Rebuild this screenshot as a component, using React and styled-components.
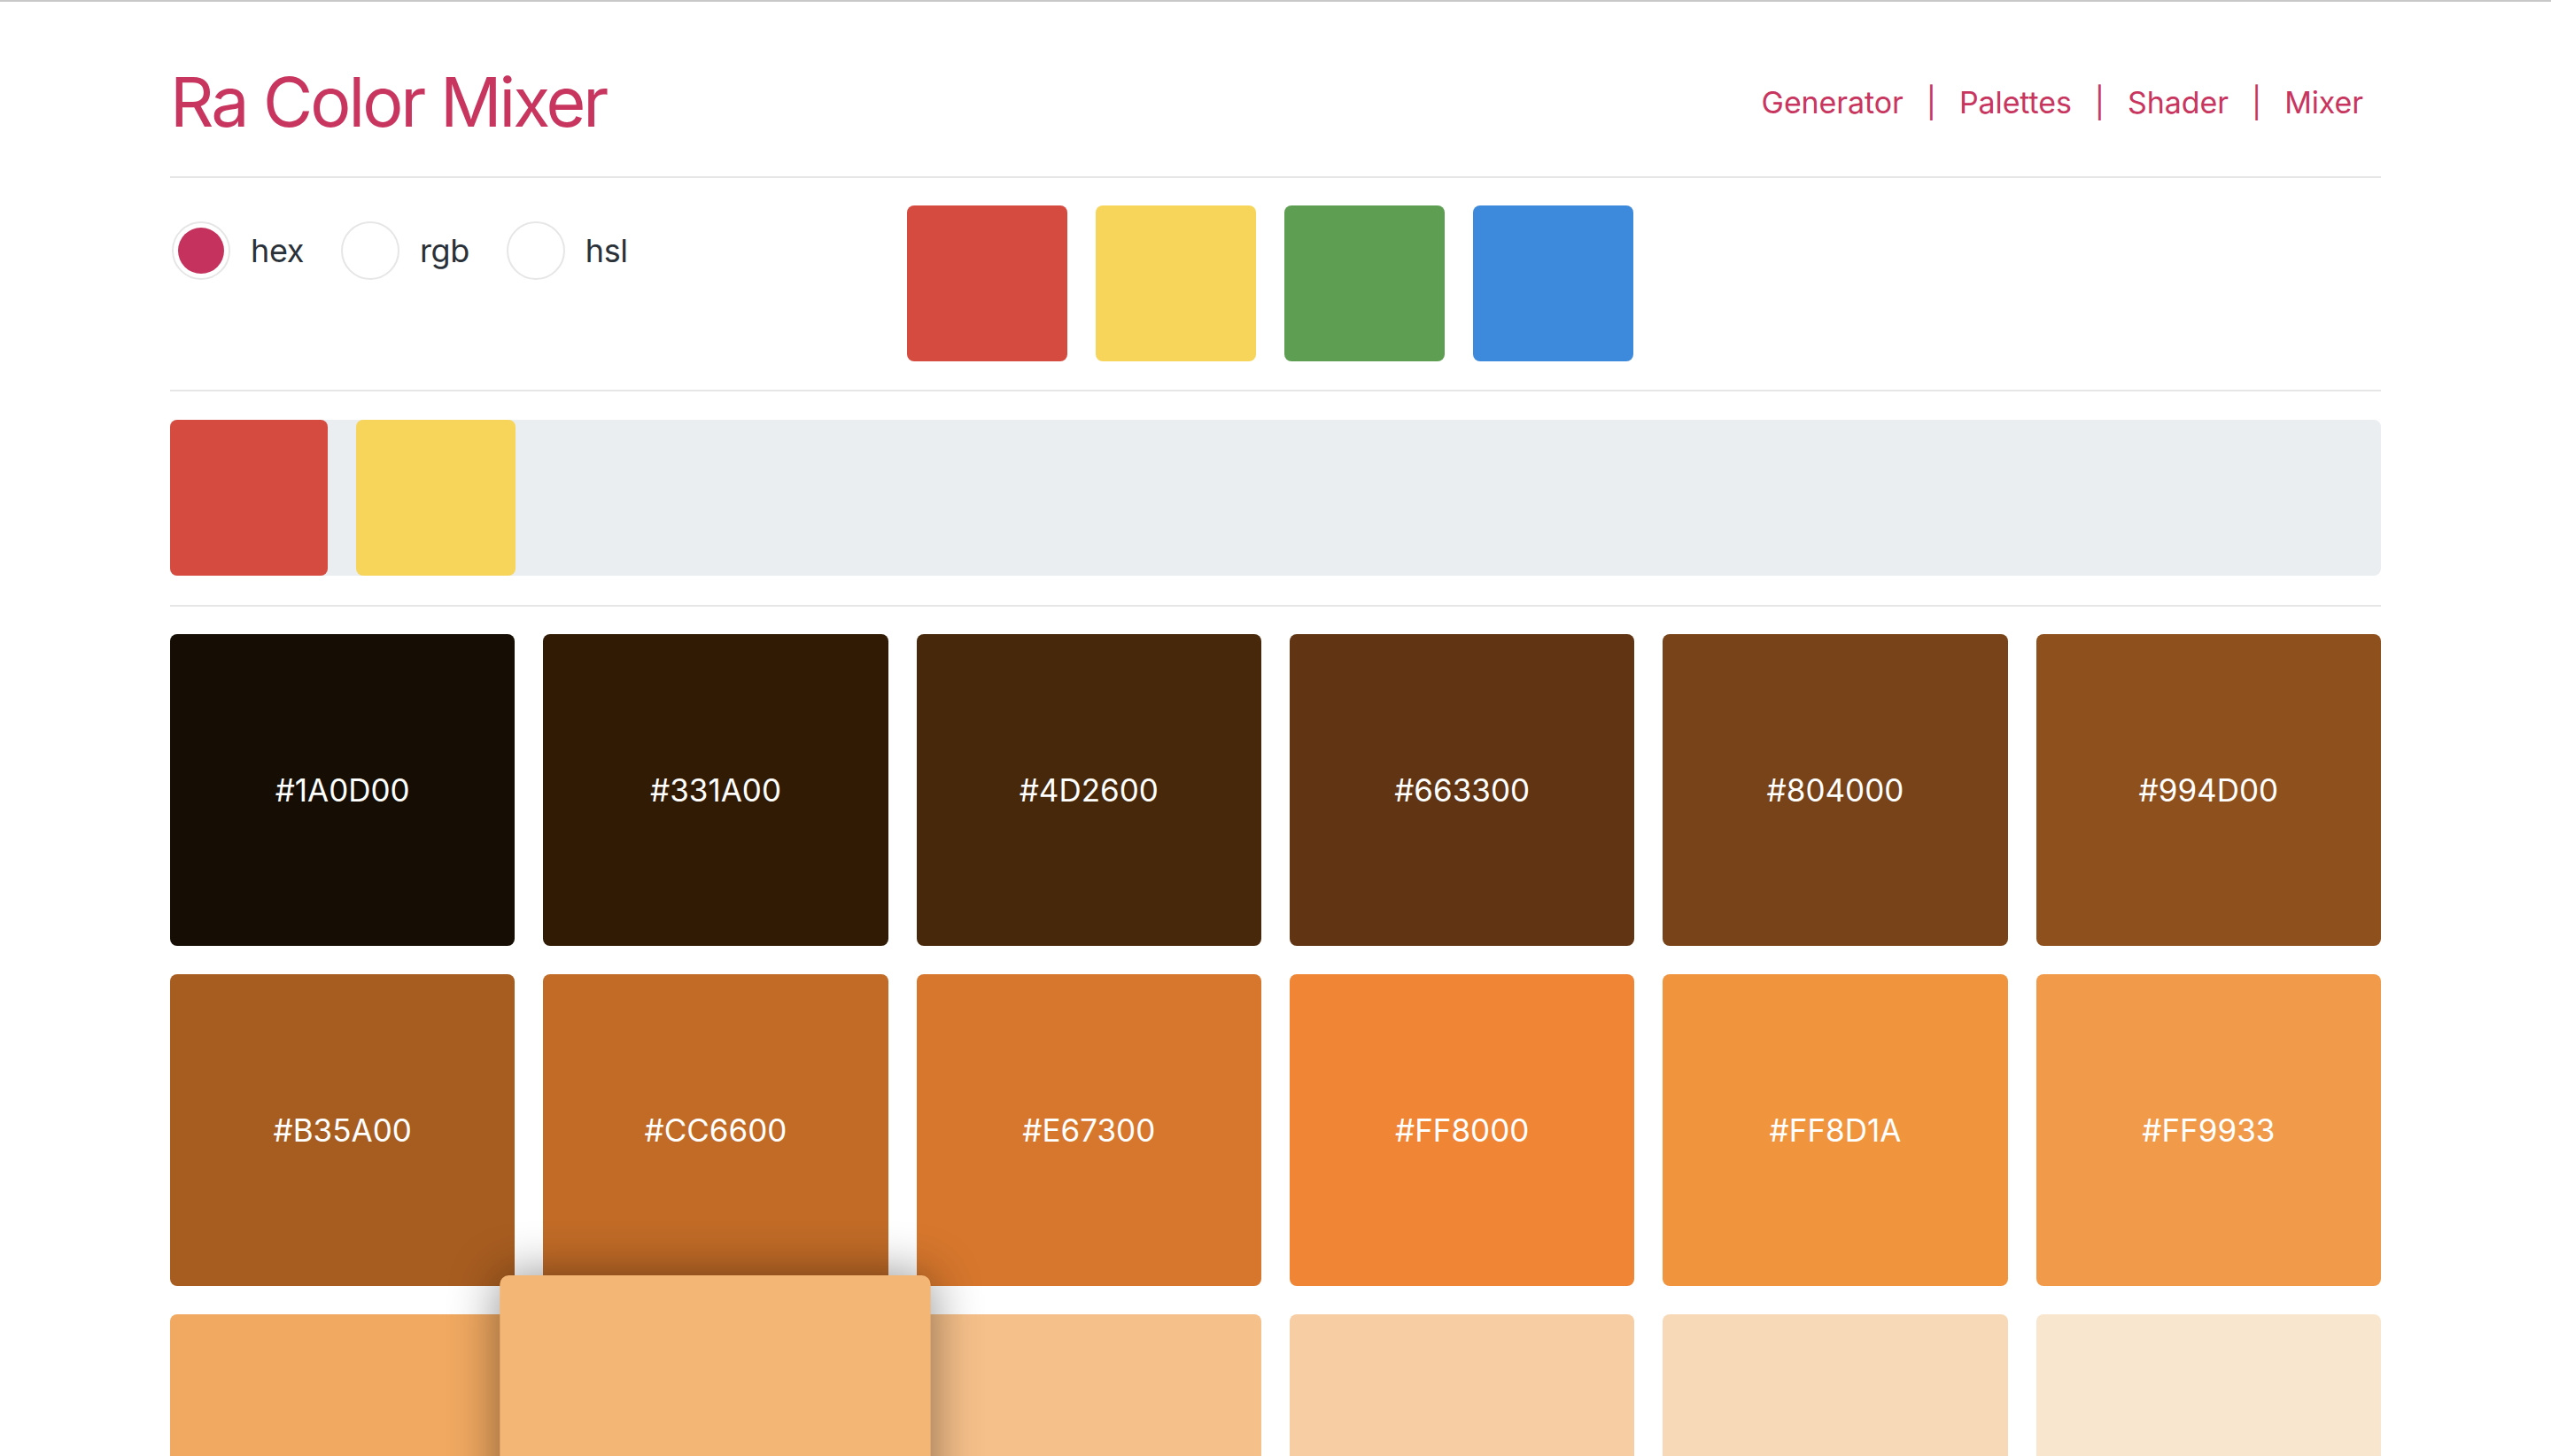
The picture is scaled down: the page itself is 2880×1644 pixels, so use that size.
import React from "react";
import styled, { createGlobalStyle } from "styled-components";

const GlobalStyle = createGlobalStyle`
  html, body {
    margin: 0;
    padding: 0;
    height: 100%;
    overflow: hidden;
    background: #ffffff;
  }
  body {
    font-family: Inter, "Noto Sans", sans-serif;
  }
`;

const Page = styled.div`
  border-top: 2px solid #c8c8c8;
`;

const Container = styled.div`
  width: 2496px;
  margin: 0 auto;
`;

const Header = styled.header`
  display: flex;
  align-items: center;
  justify-content: space-between;
  box-sizing: border-box;
  height: 199px;
  padding-top: 30px;
  border-bottom: 2px solid #e6e6e6;
`;

const Title = styled.h1`
  margin: 0;
  font-size: 77px;
  font-weight: 400;
  line-height: 1;
  letter-spacing: -3px;
  color: #c8365f;
`;

const Nav = styled.nav`
  display: flex;
  align-items: center;
  gap: 26px;
  padding-right: 20px;
  font-size: 34px;
  line-height: 1;
  letter-spacing: -0.1px;
  color: #c8365f;
`;

const NavLink = styled.a`
  color: inherit;
  text-decoration: none;
  cursor: pointer;
`;

const Pipe = styled.span`
  color: #c8365f;
`;

const Controls = styled.section`
  display: grid;
  grid-template-columns: 1fr 2fr;
  padding: 31px 0 32px;
  border-bottom: 2px solid #e6e6e6;
`;

const RadioGroup = styled.div`
  display: flex;
  align-items: center;
  align-self: start;
  gap: 42px;
  padding: 18px 0 0 2px;
`;

const RadioItem = styled.label`
  display: flex;
  align-items: center;
  gap: 23px;
  cursor: pointer;
`;

const Circle = styled.span`
  display: grid;
  place-items: center;
  box-sizing: border-box;
  width: 66px;
  height: 66px;
  border: 2px solid #e6e6e6;
  border-radius: 50%;
`;

const Dot = styled.span`
  width: 52px;
  height: 52px;
  border-radius: 50%;
  background: #c5325d;
`;

const RadioText = styled.span`
  font-size: 36px;
  line-height: 1;
  letter-spacing: -0.4px;
  color: #2a3138;
`;

const SwatchRow = styled.div`
  display: flex;
  gap: 32px;
`;

const Swatch = styled.div`
  width: ${({ $w }) => $w || 181}px;
  height: 176px;
  border-radius: 8px;
  background: ${({ $color }) => $color};
  cursor: pointer;
`;

const MixSection = styled.section`
  padding: 32px 0 33px;
  border-bottom: 2px solid #e6e6e6;
`;

const MixBar = styled.div`
  display: flex;
  gap: 32px;
  height: 176px;
  border-radius: 8px;
  background: #eaeef1;
`;

const ShadeGrid = styled.section`
  display: grid;
  grid-template-columns: repeat(6, 1fr);
  gap: 32px;
  padding-top: 31px;
`;

const Tile = styled.div`
  position: relative;
  display: flex;
  align-items: center;
  justify-content: center;
  height: 352px;
  border-radius: 8px;
  background: ${({ $color }) => $color};
  color: #ffffff;
  font-size: 35px;
  line-height: 1;
  cursor: pointer;
  transition: transform 0.2s ease;
  ${({ $lifted }) =>
    $lifted &&
    `
    transform: scale(1.25);
    z-index: 2;
    box-shadow: 0 0 44px rgba(0, 0, 0, 0.45);
  `}
`;

const baseColors = [
  { name: "red", color: "#d64b40" },
  { name: "yellow", color: "#f7d55a" },
  { name: "green", color: "#5e9e52" },
  { name: "blue", color: "#3d89dc" },
];

const shades = [
  ["#1A0D00", "#160e04"],
  ["#331A00", "#311b05"],
  ["#4D2600", "#48280b"],
  ["#663300", "#613513"],
  ["#804000", "#784319"],
  ["#994D00", "#8e511e"],
  ["#B35A00", "#a85d20"],
  ["#CC6600", "#c16b27"],
  ["#E67300", "#d7772d"],
  ["#FF8000", "#ef8535"],
  ["#FF8D1A", "#f0943e"],
  ["#FF9933", "#f19b4a"],
  ["#FFA64D", "#f1a961"],
  ["#FFB366", "#f3b675"],
  ["#FFBF80", "#f6c08a"],
  ["#FFCC99", "#f7cda3"],
  ["#FFD9B3", "#f7d9b8"],
  ["#FFE6CC", "#f9e6cf"],
  ["#FFF2E6", "#fbf2e8"],
];

const App = () => {
  return (
    <Page>
      <GlobalStyle />
      <Container>
        <Header>
          <Title>Ra Color Mixer</Title>
          <Nav>
            <NavLink>Generator</NavLink>
            <Pipe>|</Pipe>
            <NavLink>Palettes</NavLink>
            <Pipe>|</Pipe>
            <NavLink>Shader</NavLink>
            <Pipe>|</Pipe>
            <NavLink>Mixer</NavLink>
          </Nav>
        </Header>

        <Controls>
          <RadioGroup>
            <RadioItem>
              <Circle>
                <Dot />
              </Circle>
              <RadioText>hex</RadioText>
            </RadioItem>
            <RadioItem>
              <Circle />
              <RadioText>rgb</RadioText>
            </RadioItem>
            <RadioItem>
              <Circle />
              <RadioText>hsl</RadioText>
            </RadioItem>
          </RadioGroup>
          <SwatchRow>
            {baseColors.map((c) => (
              <Swatch key={c.name} $color={c.color} />
            ))}
          </SwatchRow>
        </Controls>

        <MixSection>
          <MixBar>
            <Swatch $color="#d64b40" $w={178} />
            <Swatch $color="#f7d55a" $w={180} />
          </MixBar>
        </MixSection>

        <ShadeGrid>
          {shades.map(([hex, shown], i) => (
            <Tile key={hex} $color={shown} $lifted={i === 13}>
              {hex}
            </Tile>
          ))}
        </ShadeGrid>
      </Container>
    </Page>
  );
};

export default App;
